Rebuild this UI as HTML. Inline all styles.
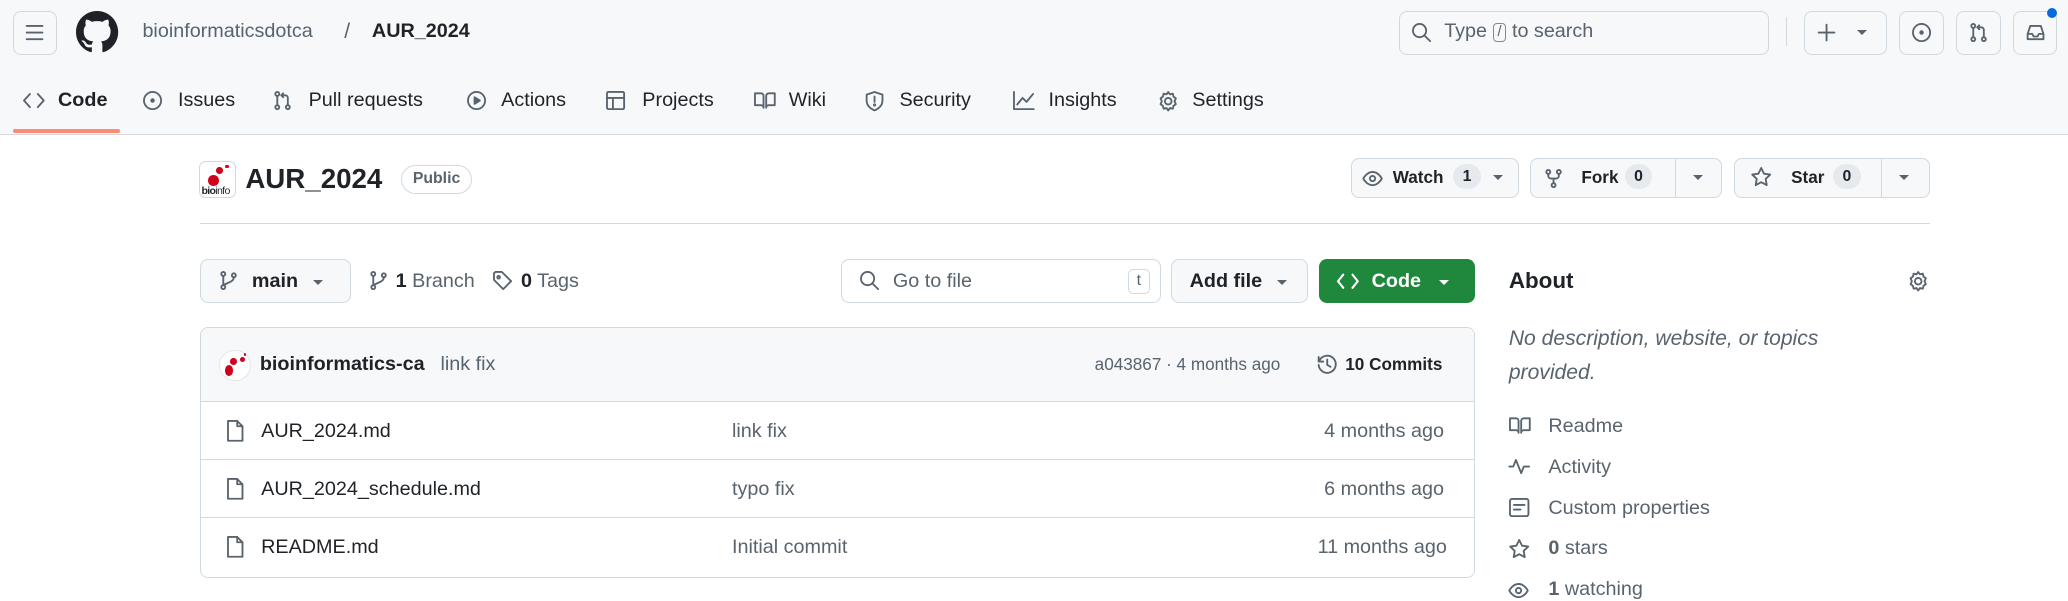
<!DOCTYPE html>
<html><head><meta charset="utf-8">
<style>
*{box-sizing:border-box;margin:0;padding:0}
html,body{width:2068px;height:596px;overflow:hidden;background:#fff}
#root{position:absolute;left:0;top:0;width:1568px;height:452px;zoom:1.3189;font-family:"Liberation Sans",Arial,sans-serif;color:#1f2328;font-size:14px}
.a{position:absolute}
.hdr{left:0;top:0;width:1568px;height:102px;background:#f6f8fa;border-bottom:1px solid #d1d9e0}
.btn{position:absolute;border:1px solid #d1d9e0;border-radius:6px;background:#f6f8fa}
.ib{background:transparent}
svg{display:block}
.ic{position:absolute;fill:none;stroke:#59636e;stroke-width:1.4;stroke-linecap:round;stroke-linejoin:round}
.t{position:absolute;white-space:nowrap;line-height:1}
.nav{font-size:15px;top:69px}
.cnt{display:inline-block;background:#e6eaef;border-radius:10px;padding:3px 7px;font-size:12px;font-weight:bold}
.caret{display:block;width:0;height:0;border-left:4px solid transparent;border-right:4px solid transparent;border-top:4px solid #59636e}
.row{position:absolute;left:152px;width:966px;border-top:1px solid #d1d9e0}
.g{color:#59636e}
</style></head><body><div id="root">
<div class="a hdr"></div>
<div class="btn ib" style="left:10px;top:8px;width:33px;height:34px"></div>
<svg class="ic" style="left:18px;top:17px" width="16" height="16"><path d="M2 3h12M2 8h12M2 13h12"/></svg>
<svg class="a" style="left:58px;top:8px" width="32" height="32" viewBox="0 0 16 16"><path fill="#1f2328" d="M8 0C3.58 0 0 3.58 0 8c0 3.54 2.29 6.530 5.47 7.59.4.07.55-.17.55-.38 0-.19-.01-.82-.01-1.49-2.01.37-2.53-.49-2.69-.94-.09-.23-.48-.94-.82-1.13-.28-.15-.68-.52-.01-.53.63-.01 1.08.58 1.23.82.72 1.21 1.87.87 2.33.66.07-.52.28-.87.51-1.07-1.78-.2-3.64-.89-3.64-3.95 0-.87.31-1.59.82-2.15-.08-.2-.36-1.02.08-2.12 0 0 .67-.21 2.2.82.64-.18 1.32-.27 2-.27.68 0 1.36.09 2 .27 1.53-1.04 2.2-.82 2.2-.82.44 1.1.16 1.92.08 2.12.51.56.82 1.27.82 2.15 0 3.07-1.87 3.750-3.65 3.95.29.25.54.73.54 1.48 0 1.07-.01 1.93-.01 2.2 0 .21.15.46.55.38A8.013 8.013 0 0016 8c0-4.42-3.58-8-8-8z"/></svg>
<div class="t" style="left:108px;top:17px;font-size:15px;color:#59636e">bioinformaticsdotca</div>
<div class="t" style="left:261px;top:16px;font-size:16px;color:#59636e">/</div>
<div class="t" style="left:282px;top:17px;font-size:15px;font-weight:bold">AUR_2024</div>
<div class="btn ib" style="left:1061px;top:8px;width:280px;height:34px"></div>
<svg class="ic" style="left:1070px;top:17px" width="16" height="16"><circle cx="6.5" cy="6.5" r="5"/><path d="M10.5 10.5l4 4"/></svg>
<div class="t" style="left:1095px;top:17px;font-size:15px;color:#59636e">Type <span style="display:inline-block;border:1px solid #818b98;border-radius:3px;font-size:11px;padding:1px 3px;vertical-align:1px">/</span> to search</div>
<div class="a" style="left:1354px;top:13px;width:1px;height:22px;background:#d1d9e0"></div>
<div class="btn ib" style="left:1368px;top:8px;width:63px;height:34px"></div>
<svg class="ic" style="left:1377px;top:17px" width="16" height="16"><path d="M8 2v12M2 8h12"/></svg>
<div class="a" style="left:1408px;top:23px"><span class="caret"></span></div>
<div class="btn ib" style="left:1440px;top:8px;width:34px;height:34px"></div>
<svg class="ic" style="left:1449px;top:17px" width="16" height="16"><circle cx="8" cy="8" r="6.5"/><circle cx="8" cy="8" r="1" fill="#59636e"/></svg>
<div class="btn ib" style="left:1483px;top:8px;width:34px;height:34px"></div>
<svg class="ic" style="left:1492px;top:17px" width="16" height="16"><circle cx="4" cy="3" r="1.5"/><circle cx="4" cy="13" r="1.5"/><circle cx="12" cy="13" r="1.5"/><path d="M4 4.5v7M12 11.5V6a2 2 0 00-2-2H7M8.5 2.5L7 4l1.5 1.5"/></svg>
<div class="btn ib" style="left:1526px;top:8px;width:34px;height:34px"></div>
<svg class="ic" style="left:1535px;top:17px" width="16" height="16"><path d="M2 9l2-6h8l2 6v4H2zM2 9h3.5l1 2h3l1-2H14"/></svg>
<div class="a" style="left:1552px;top:6px;width:8px;height:8px;border-radius:50%;background:#0969da"></div>
<svg class="ic" style="left:17px;top:68px" width="18" height="16"><path d="M6 3L1.5 8 6 13M12 3l4.5 5L12 13"/></svg>
<div class="t nav" style="left:44px;font-weight:bold">Code</div>
<div class="a" style="left:10px;top:98px;width:81px;height:3px;background:#fd8c73;border-radius:2px"></div>
<svg class="ic" style="left:108px;top:68px" width="16" height="16"><circle cx="8" cy="8" r="6.5"/><circle cx="8" cy="8" r="1" fill="#59636e"/></svg>
<div class="t nav" style="left:135px">Issues</div>
<svg class="ic" style="left:206px;top:68px" width="16" height="16"><circle cx="4" cy="3" r="1.5"/><circle cx="4" cy="13" r="1.5"/><circle cx="12" cy="13" r="1.5"/><path d="M4 4.5v7M12 11.5V6a2 2 0 00-2-2H7M8.5 2.5L7 4l1.5 1.5"/></svg>
<div class="t nav" style="left:234px">Pull requests</div>
<svg class="ic" style="left:353px;top:68px" width="16" height="16"><circle cx="8" cy="8" r="6.5"/><path d="M6.5 5.5v5l4-2.5z" fill="#59636e"/></svg>
<div class="t nav" style="left:380px">Actions</div>
<svg class="ic" style="left:459px;top:68px" width="16" height="16"><rect x="1.5" y="1.5" width="13" height="13" rx="1"/><path d="M1.5 6h13M6 6v8.5"/></svg>
<div class="t nav" style="left:487px">Projects</div>
<svg class="ic" style="left:571px;top:68px" width="18" height="16"><path d="M1.5 2.5h4.5a2 2 0 012 2v9a2 2 0 00-2-2H1.5zM16.5 2.5H12a2 2 0 00-2 2v9a2 2 0 012-2h4.5z"/></svg>
<div class="t nav" style="left:598px">Wiki</div>
<svg class="ic" style="left:655px;top:68px" width="16" height="17"><path d="M8 1.5l6 2v4.5c0 3.5-2.5 6-6 7.5-3.5-1.5-6-4-6-7.5V3.5z"/><path d="M8 5v4"/><circle cx="8" cy="11.3" r=".5"/></svg>
<div class="t nav" style="left:682px">Security</div>
<svg class="ic" style="left:767px;top:68px" width="18" height="16"><path d="M1.5 1.5v13h15M4 11l4-5 3 3 5-6"/></svg>
<div class="t nav" style="left:795px">Insights</div>
<svg class="ic" style="left:877px;top:68px" width="17" height="17"><circle cx="8.5" cy="8.5" r="2.5"/><path d="M8.5 1.5l1.3 1.8 2.2-.5.5 2.2 1.8 1.3-1 2.2 1 2.2-1.8 1.3-.5 2.2-2.2-.5-1.3 1.8-1.3-1.8-2.2.5-.5-2.2-1.8-1.3 1-2.2-1-2.2 1.8-1.3.5-2.2 2.2.5z"/></svg>
<div class="t nav" style="left:904px">Settings</div>
<div class="a" style="left:151px;top:122px;width:28px;height:28px;border:1px solid #d1d9e0;border-radius:5px;background:#fff;overflow:hidden">
<div class="a" style="left:6px;top:10px;width:8px;height:8px;border-radius:50%;background:#d0021b"></div>
<div class="a" style="left:12px;top:4px;width:5px;height:5px;border-radius:50%;background:#d0021b"></div>
<div class="a" style="left:19px;top:2px;width:3px;height:3px;border-radius:50%;background:#d0021b"></div>
<div class="t" style="left:1px;top:18px;font-size:8px;letter-spacing:-.5px"><b>bio</b>info</div></div>
<div class="t" style="left:186px;top:125px;font-size:21px;font-weight:bold">AUR_2024</div>
<div class="a" style="left:304px;top:125px;width:54px;height:22px;border:1px solid #d1d9e0;border-radius:11px;font-size:12px;font-weight:bold;color:#59636e;text-align:center;line-height:20px">Public</div>
<div class="btn" style="left:1024px;top:120px;width:128px;height:30px"></div>
<svg class="ic" style="left:1033px;top:127px" width="16" height="16"><path d="M1 8s2.5-5 7-5 7 5 7 5-2.5 5-7 5-7-5-7-5z"/><circle cx="8" cy="8" r="2"/></svg>
<div class="t" style="left:1056px;top:128px;font-size:13px;font-weight:bold">Watch</div>
<div class="a" style="left:1102px;top:124px"><span class="cnt">1</span></div>
<div class="a" style="left:1132px;top:133px"><span class="caret"></span></div>
<div class="btn" style="left:1160px;top:120px;width:146px;height:30px"></div>
<div class="a" style="left:1270px;top:120px;width:1px;height:30px;background:#d1d9e0"></div>
<svg class="ic" style="left:1170px;top:127px" width="16" height="16"><circle cx="4" cy="3" r="1.5"/><circle cx="12" cy="3" r="1.5"/><circle cx="8" cy="13" r="1.5"/><path d="M4 4.5v1.5a2 2 0 002 2h4a2 2 0 002-2V4.5M8 8v3.5"/></svg>
<div class="t" style="left:1199px;top:128px;font-size:13px;font-weight:bold">Fork</div>
<div class="a" style="left:1232px;top:124px"><span class="cnt">0</span></div>
<div class="a" style="left:1284px;top:133px"><span class="caret"></span></div>
<div class="btn" style="left:1315px;top:120px;width:148px;height:30px"></div>
<div class="a" style="left:1426px;top:120px;width:1px;height:30px;background:#d1d9e0"></div>
<svg class="ic" style="left:1327px;top:126px" width="17" height="17"><path d="M8.5 1.5l2.1 4.3 4.7.7-3.4 3.3.8 4.7-4.2-2.2-4.2 2.2.8-4.7L1.7 6.5l4.7-.7z"/></svg>
<div class="t" style="left:1358px;top:128px;font-size:13px;font-weight:bold">Star</div>
<div class="a" style="left:1390px;top:124px"><span class="cnt">0</span></div>
<div class="a" style="left:1440px;top:133px"><span class="caret"></span></div>
<div class="a" style="left:152px;top:169px;width:1311px;height:1px;background:#d1d9e0"></div>
<div class="btn" style="left:152px;top:196px;width:114px;height:34px"></div>
<svg class="ic" style="left:165px;top:205px" width="16" height="16"><circle cx="4" cy="3" r="1.5"/><circle cx="4" cy="13" r="1.5"/><circle cx="12" cy="4" r="1.5"/><path d="M4 4.5v7M12 5.5c0 3-3 3.5-7 5.5"/></svg>
<div class="t" style="left:191px;top:206px;font-size:15px;font-weight:bold">main</div>
<div class="a" style="left:237px;top:212px"><span class="caret"></span></div>
<svg class="ic" style="left:279px;top:205px" width="16" height="16"><circle cx="4" cy="3" r="1.5"/><circle cx="4" cy="13" r="1.5"/><circle cx="12" cy="4" r="1.5"/><path d="M4 4.5v7M12 5.5c0 3-3 3.5-7 5.5"/></svg>
<div class="t" style="left:300px;top:206px;font-size:15px;color:#59636e"><b style="color:#1f2328">1</b> Branch</div>
<svg class="ic" style="left:373px;top:205px" width="17" height="17"><path d="M1.5 2.5v5l7 7 6-6-7-7h-5z"/><circle cx="5" cy="5.5" r="1"/></svg>
<div class="t" style="left:395px;top:206px;font-size:15px;color:#59636e"><b style="color:#1f2328">0</b> Tags</div>
<div class="btn ib" style="left:638px;top:196px;width:242px;height:34px"></div>
<svg class="ic" style="left:651px;top:205px" width="16" height="16"><circle cx="6.5" cy="6.5" r="5"/><path d="M10.5 10.5l4 4"/></svg>
<div class="t" style="left:677px;top:206px;font-size:15px;color:#59636e">Go to file</div>
<div class="a" style="left:855px;top:204px;width:17px;height:19px;border:1px solid #d1d9e0;border-radius:4px;font-size:12px;text-align:center;line-height:17px;color:#59636e">t</div>
<div class="btn" style="left:888px;top:196px;width:104px;height:34px"></div>
<div class="t" style="left:902px;top:206px;font-size:15px;font-weight:bold">Add file</div>
<div class="a" style="left:968px;top:212px"><span class="caret"></span></div>
<div class="a" style="left:1000px;top:196px;width:118px;height:34px;background:#1f883d;border-radius:6px"></div>
<svg class="a" style="left:1013px;top:206px;fill:none;stroke:#fff;stroke-width:1.6;stroke-linecap:round;stroke-linejoin:round" width="18" height="14"><path d="M5.5 2L1.5 7l4 5M12.5 2l4 5-4 5"/></svg>
<div class="t" style="left:1040px;top:206px;font-size:15px;font-weight:bold;color:#fff">Code</div>
<div class="a" style="left:1091px;top:212px"><span class="caret" style="border-top-color:#fff"></span></div>
<div class="t" style="left:1144px;top:205px;font-size:17px;font-weight:bold">About</div>
<svg class="ic" style="left:1446px;top:205px" width="17" height="17"><circle cx="8.5" cy="8.5" r="2.5"/><path d="M8.5 1.5l1.3 1.8 2.2-.5.5 2.2 1.8 1.3-1 2.2 1 2.2-1.8 1.3-.5 2.2-2.2-.5-1.3 1.8-1.3-1.8-2.2.5-.5-2.2-1.8-1.3 1-2.2-1-2.2 1.8-1.3.5-2.2 2.2.5z"/></svg>
<div class="t" style="left:1144px;top:244px;font-size:16px;font-style:italic;color:#59636e;line-height:26px">No description, website, or topics<br>provided.</div>
<svg class="ic" style="left:1143px;top:315px" width="18" height="16"><path d="M1.5 2.5h4.5a2 2 0 012 2v9a2 2 0 00-2-2H1.5zM16.5 2.5H12a2 2 0 00-2 2v9a2 2 0 012-2h4.5z"/></svg>
<div class="t g" style="left:1174px;top:316px;font-size:15px">Readme</div>
<svg class="ic" style="left:1143px;top:346px" width="18" height="16"><path d="M1 8h3l2-5 4 10 2-5h4"/></svg>
<div class="t g" style="left:1174px;top:347px;font-size:15px">Activity</div>
<svg class="ic" style="left:1143px;top:377px" width="17" height="16"><rect x="1.5" y="1.5" width="14" height="13" rx="1.5"/><path d="M4.5 6h8M4.5 9.5h5"/></svg>
<div class="t g" style="left:1174px;top:378px;font-size:15px">Custom properties</div>
<svg class="ic" style="left:1143px;top:408px" width="17" height="17"><path d="M8.5 1.5l2.1 4.3 4.7.7-3.4 3.3.8 4.7-4.2-2.2-4.2 2.2.8-4.7L1.7 6.5l4.7-.7z"/></svg>
<div class="t g" style="left:1174px;top:409px;font-size:15px"><b style="color:#59636e">0</b> stars</div>
<svg class="ic" style="left:1143px;top:440px" width="16" height="16"><path d="M1 8s2.5-5 7-5 7 5 7 5-2.5 5-7 5-7-5-7-5z"/><circle cx="8" cy="8" r="2"/></svg>
<div class="t g" style="left:1174px;top:440px;font-size:15px"><b>1</b> watching</div>
<div class="a" style="left:152px;top:248px;width:966px;height:190px;border:1px solid #d1d9e0;border-radius:6px;overflow:hidden">
<div class="a" style="left:0;top:0;width:966px;height:56px;background:#f6f8fa;border-bottom:1px solid #d1d9e0"></div>
</div>
<div class="a" style="left:166px;top:265px;width:24px;height:24px;border-radius:50%;background:#fff;border:1px solid #e6e6e6">
<div class="a" style="left:4px;top:11px;width:6px;height:8px;border-radius:50%;background:#d0021b"></div>
<div class="a" style="left:8px;top:6px;width:5px;height:5px;border-radius:50%;background:#d0021b"></div>
<div class="a" style="left:15px;top:5px;width:4px;height:4px;border-radius:50%;background:#d0021b"></div>
<div class="a" style="left:18px;top:2px;width:2px;height:2px;border-radius:50%;background:#d0021b"></div></div>
<div class="t" style="left:197px;top:269px;font-size:15px;font-weight:bold">bioinformatics-ca</div>
<div class="t g" style="left:334px;top:269px;font-size:15px">link fix</div>
<div class="t g" style="left:830px;top:270px;font-size:13px">a043867 · 4 months ago</div>
<svg class="ic" style="left:998px;top:268px" width="17" height="17"><path d="M2 3v3.5h3.5"/><path d="M2.5 6a6.5 6.5 0 11-.5 3"/><path d="M8.5 5v4l2.5 1.5"/></svg>
<div class="t" style="left:1020px;top:270px;font-size:13px;font-weight:bold">10 Commits</div>
<div class="row" style="top:348px"></div>
<div class="row" style="top:392px"></div>
<svg class="ic" style="left:171px;top:318px" width="14" height="18"><path d="M1.5 1.5h7l4 4v11h-11z"/><path d="M8.5 1.5v4h4"/></svg>
<div class="t" style="left:198px;top:320px;font-size:15px">AUR_2024.md</div>
<div class="t g" style="left:555px;top:320px;font-size:15px">link fix</div>
<div class="t g" style="left:1004px;top:320px;font-size:15px">4 months ago</div>
<svg class="ic" style="left:171px;top:362px" width="14" height="18"><path d="M1.5 1.5h7l4 4v11h-11z"/><path d="M8.5 1.5v4h4"/></svg>
<div class="t" style="left:198px;top:364px;font-size:15px">AUR_2024_schedule.md</div>
<div class="t g" style="left:555px;top:364px;font-size:15px">typo fix</div>
<div class="t g" style="left:1004px;top:364px;font-size:15px">6 months ago</div>
<svg class="ic" style="left:171px;top:406px" width="14" height="18"><path d="M1.5 1.5h7l4 4v11h-11z"/><path d="M8.5 1.5v4h4"/></svg>
<div class="t" style="left:198px;top:408px;font-size:15px">README.md</div>
<div class="t g" style="left:555px;top:408px;font-size:15px">Initial commit</div>
<div class="t g" style="left:999px;top:408px;font-size:15px">11 months ago</div>
</div></body></html>
